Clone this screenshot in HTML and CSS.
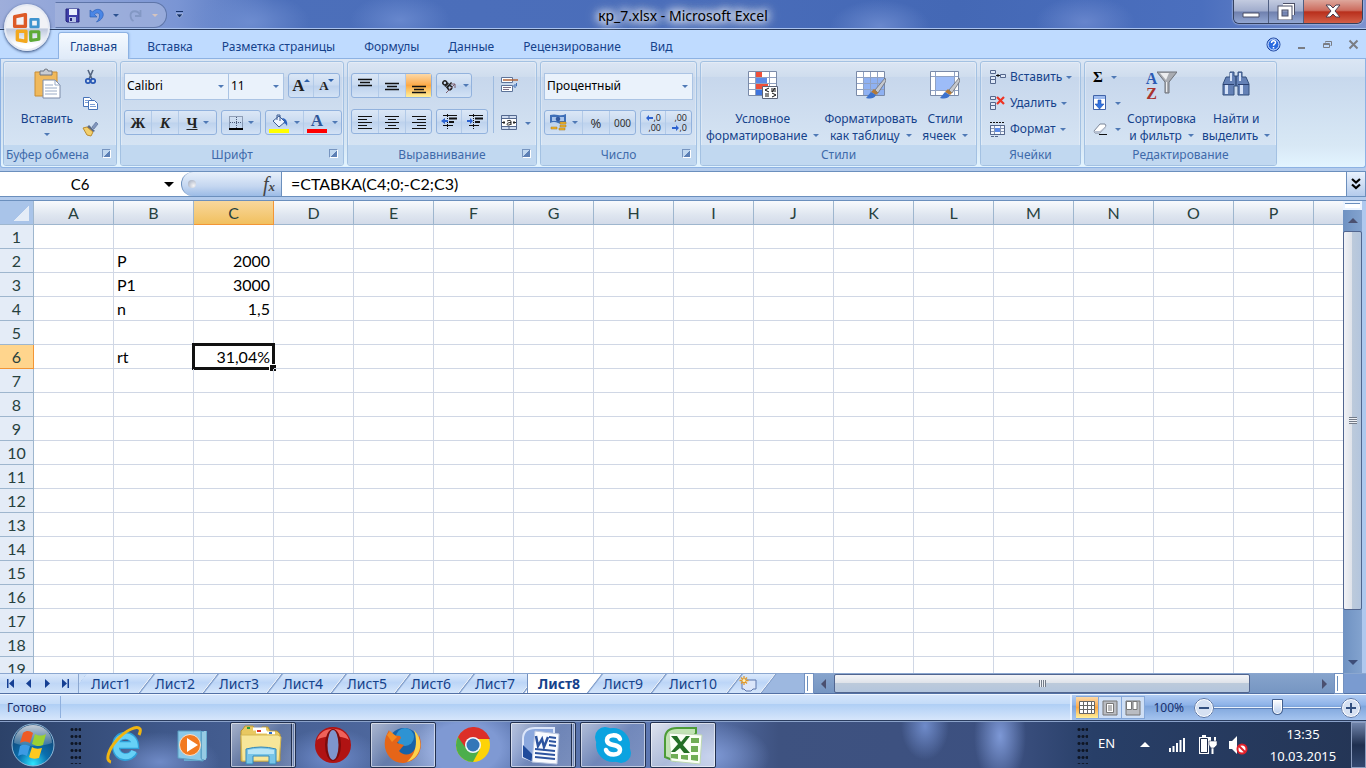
FILE: index.html
```html
<!DOCTYPE html>
<html lang="ru">
<head>
<meta charset="utf-8">
<title>кр_7.xlsx - Microsoft Excel</title>
<link rel="stylesheet" href="styles.css">
</head>
<body>
<div class="app">
  <header class="titlebar">
    <button class="office" aria-label="Office">
      <svg width="30" height="30" viewBox="0 0 28 28" fill="none" stroke-linejoin="round">
        <path d="M2.500 3.500l10-2v11h-10z" stroke="#dd5a26" stroke-width="3.200"/>
        <path d="M17.500 6h7v7h-7z" stroke="#3f94cf" stroke-width="2.600"/>
        <path d="M5 17h8v9.500l-8-1.500z" stroke="#f3a81f" stroke-width="3.200"/>
        <path d="M17.500 17.500h7.500v7l-7.500 1z" stroke="#5daa36" stroke-width="3"/>
      </svg>
    </button>
    <div class="qat">
      <button aria-label="Сохранить"><svg width="15" height="15" viewBox="0 0 15 15"><path d="M1 1h13v13H2l-1-1z" fill="#3e3ea8" stroke="#24247c"/><path d="M4 1h8v6H4z" fill="#e9effc"/><path d="M4 9h7v5H4z" fill="#b7c3e6"/><path d="M5 10h2v3H5z" fill="#24247c"/></svg></button>
      <button aria-label="Отменить"><svg width="15" height="15" viewBox="0 0 15 15"><path d="M1 2v7h7L5.500 6.500C8 4 11 5 10.500 8c0 2-1 4-3 6 6-2 8-7 6-10C11 0 6 1 3.500 4z" fill="#4a86e6" stroke="#2357b0" stroke-width=".6"/></svg></button>
      <i class="dd"></i>
      <button aria-label="Вернуть"><svg width="15" height="15" viewBox="0 0 15 15"><path d="M12.500 2v6H7M12 7C10 2 3 2 2.500 7c0 3 1 5 3 6" fill="none" stroke="#8398c4" stroke-width="1.800"/></svg></button>
      <i class="dd dim"></i>
    </div>
    <button class="customize" aria-label="Настройка панели"><svg width="7" height="8" viewBox="0 0 7 8"><path d="M0 0h7v1H0z" fill="#17346c"/><path d="M0 3h7L3.500 7z" fill="#17346c" stroke="#dce6f7" stroke-width=".5"/></svg></button>
    <h1>кр_7.xlsx - Microsoft Excel</h1>
    <div class="winbtns">
      <button aria-label="Свернуть"><svg width="18" height="18" viewBox="0 0 18 18"><path d="M1 11h16v4H1z" fill="#fff" stroke="#4b4f66"/></svg></button>
      <button aria-label="Развернуть"><svg width="18" height="18" viewBox="0 0 18 18" fill="none"><path d="M6 3h10v10" stroke="#4b4f66" stroke-width="4"/><path d="M6 3h10v10" stroke="#fff" stroke-width="2"/><path d="M3 6h10v10H3z" stroke="#4b4f66" stroke-width="5"/><path d="M3 6h10v10H3z" stroke="#fff" stroke-width="3"/></svg></button>
      <button class="close" aria-label="Закрыть"><svg width="18" height="18" viewBox="0 0 18 18"><path d="M2 3h4l3 3 3-3h4l-5 6 5 6h-4l-3-3-3 3H2l5-6z" fill="#fff" stroke="#4b4052"/></svg></button>
    </div>
  </header>

  <nav class="tabs">
    <button class="tab on">Главная</button><button class="tab">Вставка</button><button class="tab">Разметка страницы</button><button class="tab">Формулы</button><button class="tab">Данные</button><button class="tab">Рецензирование</button><button class="tab">Вид</button>
    <div class="tabtools">
      <button aria-label="Справка"><svg width="15" height="15" viewBox="0 0 15 15"><circle cx="7.500" cy="7.500" r="6.500" fill="#2b6be0" stroke="#173f9c"/><circle cx="7.500" cy="7.500" r="5.500" fill="none" stroke="#d9e8ff"/><path d="M5.500 6c0-3 4-3 4-.5 0 1.500-2 1.500-2 3.200M7.500 10v1.500" fill="none" stroke="#fff" stroke-width="1.500"/></svg></button>
      <button aria-label="Свернуть книгу"><svg width="11" height="11" viewBox="0 0 11 11"><path d="M2 8h7v2H2z" fill="#7a7d84"/></svg></button>
      <button aria-label="Восстановить книгу"><svg width="11" height="11" viewBox="0 0 11 11" fill="none" stroke="#7a7d84"><path d="M1.500 4.500h6v4h-6zM3.500 3.500v-1h6v4h-1M1 5.500h7"/></svg></button>
      <button aria-label="Закрыть книгу"><svg width="11" height="11" viewBox="0 0 11 11"><path d="M1.500 1.500l8 8m0-8l-8 8" stroke="#7a7d84" stroke-width="2"/></svg></button>
    </div>
  </nav>

  <section class="ribbon">
    <div class="group g-clip">
      <div class="body">
        <button class="big"><svg width="30" height="32" viewBox="0 0 30 32"><path d="M3 4h22v24H3z" fill="#f0b95c" stroke="#c98e35"/><path d="M8 3h4a2 2 0 0 1 4 0h4v4H8z" fill="#c9ccd2" stroke="#6e7480"/><path d="M11 12h12l5 5v13H11z" fill="#fff" stroke="#7d8ba8"/><path d="M23 12v5h5M13 17h8M13 20h12M13 23h12M13 26h12" fill="none" stroke="#9aabc6"/></svg><span>Вставить</span><i class="dd"></i></button>
        <div class="stack tools">
          <button aria-label="Вырезать"><svg width="17" height="16" viewBox="0 0 17 16" fill="none"><path d="M6 1l4 9M11 1L7 10" stroke="#53647f" stroke-width="1.600"/><circle cx="6" cy="12" r="2.200" stroke="#2757b4" stroke-width="1.700"/><circle cx="11" cy="12" r="2.200" stroke="#2757b4" stroke-width="1.700"/></svg></button>
          <button aria-label="Копировать"><svg width="17" height="16" viewBox="0 0 17 16" fill="#fff" stroke="#4773b8"><path d="M1.500 2.500h6l2 2v7h-8z"/><path d="M6.500 5.500h6l3 3v6h-9z"/><path d="M3 5.500h3M3 7.500h3M8 9.500h5M8 11.500h6" stroke="#7d9fd5"/></svg></button>
          <button aria-label="Формат по образцу"><svg width="17" height="16" viewBox="0 0 17 16"><path d="M10 6l4-5 2 2-4 5z" fill="#8196bd" stroke="#546a94" stroke-width=".6"/><path d="M7 4l6 6-2 1-6-5z" fill="#5b6a86"/><path d="M1 7l4-1 6 5-2 4-4-1z" fill="#f2cf6c" stroke="#b98a2f"/></svg></button>
        </div>
      </div>
      <h2>Буфер обмена<i class="launch"></i></h2>
    </div>

    <div class="group g-font">
      <div class="body rows">
        <div class="row">
          <div class="pair">
            <label class="combo w-font"><select aria-label="Шрифт"><option>Calibri</option></select></label>
            <label class="combo w-size"><select aria-label="Размер"><option>11</option></select></label>
          </div>
          <div class="set"><button class="w26 serif big-a" aria-label="Увеличить размер">A<i class="up"></i></button><button class="w26 serif small-a" aria-label="Уменьшить размер">A<i class="down"></i></button></div>
        </div>
        <div class="row">
          <div class="set"><button class="w27 serif">Ж</button><button class="w27 serif it">К</button><button class="w37 serif"><u>Ч</u><i class="dd"></i></button></div>
          <div class="set"><button class="w38" aria-label="Границы"><svg width="14" height="14" viewBox="0 0 14 14" stroke="#4a5a78" fill="none"><path d="M.5 .5h13v12H.5zM7.500 1v12M1 6.500h12" stroke-dasharray="1 1"/><path d="M0 13h14" stroke="#000" stroke-width="2"/></svg><i class="dd"></i></button></div>
          <div class="set"><button class="w38" aria-label="Цвет заливки"><svg width="20" height="20" viewBox="0 0 20 20"><path d="M10 3l6 6-6 5-6-6z" fill="#eef4ff" stroke="#3d5d93"/><path d="M8 7V2h3v6" fill="none" stroke="#3d5d93"/><path d="M13 5c4 0 6 4 5 8-1-2-2-3-4-3l2-1z" fill="#2c62bf"/><path d="M0 16h20v4H0z" fill="#ff0"/></svg><i class="dd"></i></button><button class="w37" aria-label="Цвет текста"><span class="fc">A</span><i class="dd"></i></button></div>
        </div>
      </div>
      <h2>Шрифт<i class="launch"></i></h2>
    </div>

    <div class="group g-align">
      <div class="body rows side">
        <div class="col">
          <div class="row">
            <div class="set">
              <button class="w27" aria-label="По верхнему краю"><svg width="14" height="16" viewBox="0 0 14 16"><path d="M0 1.500h14M2 4.500h10M0 7.500h14" stroke="#111" stroke-width="1.300"/></svg></button>
              <button class="w27" aria-label="По середине"><svg width="14" height="16" viewBox="0 0 14 16"><path d="M0 5.500h14M2 8.500h10M0 11.500h14" stroke="#111" stroke-width="1.300"/></svg></button>
              <button class="w26 hot" aria-label="По нижнему краю"><svg width="14" height="16" viewBox="0 0 14 16"><path d="M0 8.500h14M2 11.500h10M0 14.500h14" stroke="#111" stroke-width="1.300"/></svg></button>
            </div>
            <div class="set"><button class="w35" aria-label="Ориентация"><svg width="18" height="18" viewBox="0 0 18 18"><g transform="rotate(45 7 8)" fill="none" stroke="#222" stroke-width="1.500"><circle cx="4" cy="8" r="2"/><path d="M6.500 5.500v5M8.500 3v7.500"/><circle cx="10.800" cy="8" r="2"/></g><path d="M6 16l9-9m0 4V7h-4" stroke="#7b5c6b" fill="none"/></svg><i class="dd"></i></button></div>
          </div>
          <div class="row">
            <div class="set">
              <button class="w27" aria-label="По левому краю"><svg width="14" height="14" viewBox="0 0 14 14"><path d="M0 1.500h14M0 4.500h9M0 7.500h14M0 10.500h9M0 13.500h14" stroke="#111"/></svg></button>
              <button class="w27" aria-label="По центру"><svg width="14" height="14" viewBox="0 0 14 14"><path d="M0 1.500h14M3 4.500h8M0 7.500h14M3 10.500h8M0 13.500h14" stroke="#111"/></svg></button>
              <button class="w26" aria-label="По правому краю"><svg width="14" height="14" viewBox="0 0 14 14"><path d="M0 1.500h14M5 4.500h9M0 7.500h14M5 10.500h9M0 13.500h14" stroke="#111"/></svg></button>
            </div>
            <div class="set">
              <button class="w26" aria-label="Уменьшить отступ"><svg width="16" height="15" viewBox="0 0 16 15"><path d="M2 1.500h14M2 11.500h10" stroke="#111"/><path d="M8 4.500h8M8 8h5" stroke="#111" stroke-width="2"/><path d="M6.500 0v15" stroke="#111" stroke-dasharray="1 1"/><path d="M0 7l4-3v2h3v2H4v2z" fill="#2c62d0"/></svg></button>
              <button class="w26" aria-label="Увеличить отступ"><svg width="16" height="15" viewBox="0 0 16 15"><path d="M2 1.500h14M2 11.500h10" stroke="#111"/><path d="M8 4.500h8M8 8h5" stroke="#111" stroke-width="2"/><path d="M6.500 0v15" stroke="#111" stroke-dasharray="1 1"/><path d="M6 7L3 4v2H0v2h3v2z" fill="#2c62d0"/></svg></button>
            </div>
          </div>
        </div>
        <div class="col extra">
          <button class="ic" aria-label="Перенос текста"><svg width="17" height="16" viewBox="0 0 17 16" fill="#fff"><path d="M.5 .5h11v5H.5zM.5 8.500h11v6H.5z" stroke="#5d7399"/><path d="M2 3h15" stroke="#b0643a" stroke-width="1.400"/><path d="M2 10.500h8M2 12.500h6" stroke="#7d6f85"/><path d="M15.500 6v3h-2m1-2l-2 2 2 2" fill="none" stroke="#3d6db5"/></svg></button>
          <button class="ic" aria-label="Объединить"><svg width="17" height="16" viewBox="0 0 17 16"><path d="M.5 .5h15v14H.5zM.5 3.500h15M.5 11.500h15M8 1v2M8 12v3" fill="#cfdcf0" stroke="#53688f"/><path d="M1 4h14v7H1z" fill="#fff"/><path d="M1 7.500h3M12 7.500h3M3 6v3M13 6v3" stroke="#222"/><path d="M6 6c3-1 4-1 4 1v3M10 7.500c-5 0-5 3-2 2.500l2-1" stroke="#222" fill="none"/></svg><i class="dd"></i></button>
        </div>
      </div>
      <h2>Выравнивание<i class="launch"></i></h2>
    </div>

    <div class="group g-num">
      <div class="body rows">
        <div class="row"><label class="combo w-full"><select aria-label="Числовой формат"><option>Процентный</option></select></label></div>
        <div class="row">
          <div class="set"><button class="w38" aria-label="Финансовый формат"><svg width="17" height="17" viewBox="0 0 17 17"><path d="M0 1q4-1 8 0t8-1v9q-4 2-8 0T0 9z" fill="#3e6fb8"/><path d="M2 3h12v4H2z" fill="#a9c4ea"/><circle cx="8" cy="5" r="2.300" fill="#3159a0"/><path d="M10 8h6v2h-6zM10 11h6v2h-6zM9 14h6v2H9zM1 13h6v2H1z" fill="#f1b52d" stroke="#a77614" stroke-width=".5"/></svg><i class="dd"></i></button><button class="w27 glyph" aria-label="Процентный формат">%</button><button class="w26 glyph sm" aria-label="Формат с разделителями">000</button></div>
          <div class="set">
            <button class="w26 digits" aria-label="Увеличить разрядность"><span><svg width="7" height="6" viewBox="0 0 7 6"><path d="M0 3l3-3v2h4v2H3v2z" fill="#2c62d0"/></svg>,0</span><span>,00</span></button>
            <button class="w26 digits" aria-label="Уменьшить разрядность"><span>,00</span><span><svg width="7" height="6" viewBox="0 0 7 6"><path d="M7 3L4 0v2H0v2h4v2z" fill="#2c62d0"/></svg>,0</span></button>
          </div>
        </div>
      </div>
      <h2>Число<i class="launch"></i></h2>
    </div>

    <div class="group g-style">
      <div class="body">
        <button class="big"><svg width="30" height="32" viewBox="0 0 30 32"><path d="M.5 3.500h28v24H.5z" fill="#fff" stroke="#7a8aa8"/><path d="M1 9.500h27M1 15.500h27M1 21.500h27M7.500 4v23M21.500 4v23" stroke="#8fa0c0"/><path d="M8 4h6v5H8z" fill="#ee4f3a"/><path d="M8 10h11v5H8z" fill="#5b8ae8"/><path d="M8 16h12v5H8z" fill="#ee4f3a"/><path d="M8 22h6v5H8z" fill="#3f74dd"/><path d="M14.500 18.500h15v12h-15z" fill="#fff" stroke="#5b6478"/><path d="M21 20l-4 2 4 2M17 26h4M17 28h4M23 21h5M23 23h5M24 25l4 2-4 2M27 20l-3 4" stroke="#111" fill="none"/></svg><span>Условное</span><span>форматирование<i class="dd"></i></span></button>
        <button class="big"><svg width="30" height="32" viewBox="0 0 30 32"><path d="M.5 3.500h28v24H.5z" fill="#fff" stroke="#7a8aa8"/><path d="M8 10h20v17H8z" fill="#8fb1f2"/><path d="M1 9.500h27M1 15.500h27M1 21.500h27M7.500 4v23M14.500 4v23M21.500 4v23" stroke="#90a2c4"/><path d="M29 10l1 3-8 12-3-3z" fill="#c5c8ce" stroke="#6a6d75" stroke-width=".8"/><path d="M18 21l4 4-2 2-5-3z" fill="#b47a36"/><path d="M15 24l5 3c-2 4-6 4-10 3z" fill="#3d72cc"/></svg><span>Форматировать</span><span>как таблицу<i class="dd"></i></span></button>
        <button class="big"><svg width="30" height="32" viewBox="0 0 30 32"><path d="M.5 3.500h28v24H.5z" fill="#fff" stroke="#7a8aa8"/><path d="M1 8.500h27M1 22.500h27M5.500 4v23M24.500 4v23" stroke="#90a2c4"/><path d="M6 9h18v13H6z" fill="#9dbcf8"/><path d="M29 10l1 3-8 12-3-3z" fill="#c5c8ce" stroke="#6a6d75" stroke-width=".8"/><path d="M18 21l4 4-2 2-5-3z" fill="#b47a36"/><path d="M15 24l5 3c-2 4-6 4-10 3z" fill="#3d72cc"/></svg><span>Стили</span><span>ячеек<i class="dd"></i></span></button>
      </div>
      <h2>Стили</h2>
    </div>

    <div class="group g-cells">
      <div class="body">
        <div class="stack">
          <button class="line"><svg width="17" height="16" viewBox="0 0 17 16" fill="#dfe9f8" stroke="#54678c"><path d="M1.500 1.500h5v3h-5zM1.500 7.500h5v3h-5zM1.500 10.500h5v4h-5zM11.500 5.500h5v3h-5z"/><path d="M7 6.500h4M9 5v3" stroke="#111"/></svg>Вставить<i class="dd"></i></button>
          <button class="line"><svg width="17" height="16" viewBox="0 0 17 16" fill="#dfe9f8" stroke="#54678c"><path d="M1.500 1.500h5v3h-5zM1.500 7.500h5v3h-5zM1.500 10.500h5v4h-5z"/><path d="M8 2l7 7m0-7L8 9" stroke="#ee3424" stroke-width="2.200"/></svg>Удалить<i class="dd"></i></button>
          <button class="line"><svg width="17" height="16" viewBox="0 0 17 16" fill="#f4f8ff" stroke="#54678c"><path d="M1 1.500h14" stroke="#111" stroke-dasharray="2 1"/><path d="M1.500 4.500h14v9h-14zM2 7.500h13M2 10.500h13M5.500 5v8M11.500 5v8" stroke="#8596b5"/><path d="M1.500 4.500h14v9h-14z" fill="none"/><path d="M6 7h5v4H6z" fill="#5b8ae8" stroke="none"/><path d="M2 15.500h8" stroke-dasharray="3 1"/></svg>Формат<i class="dd"></i></button>
        </div>
      </div>
      <h2>Ячейки</h2>
    </div>

    <div class="group g-edit">
      <div class="body">
        <div class="stack">
          <button class="line sigma">Σ<i class="dd"></i></button>
          <button class="line" aria-label="Заполнить"><svg width="14" height="16" viewBox="0 0 14 16"><path d="M.5 .5h12v14H.5z" fill="#fff" stroke="#4063a8"/><path d="M1 1h11v3H1z" fill="#9ebcf0"/><path d="M5 5h3v4h3l-4.500 5L2 9h3z" fill="#3273e0" stroke="#1b4fae" stroke-width=".6"/></svg><i class="dd"></i></button>
          <button class="line" aria-label="Очистить"><svg width="14" height="16" viewBox="0 0 14 16"><path d="M1 10l6-7h5l1 2-6 7H2z" fill="#fff" stroke="#7d8799"/><path d="M1 10h6v2H2zM7 10l6-5v2l-6 5z" fill="#b8c1d1"/><path d="M6 13.500h8" stroke="#111"/></svg><i class="dd"></i></button>
        </div>
        <button class="big"><span class="sort"><span class="az"><b>A</b><b>Z</b></span><svg width="20" height="24" viewBox="0 0 20 24"><path d="M0 1h20l-8 10v11H8V11z" fill="#a9acb2" stroke="#6e727a"/><path d="M3 2h9l-3 7z" fill="#ecedef"/><path d="M9 11h1v10H9z" fill="#ecedef"/></svg></span><span>Сортировка</span><span>и фильтр<i class="dd"></i></span></button>
        <button class="big"><svg width="30" height="32" viewBox="0 0 30 32"><path d="M9 4h4v4h2v10h-2v9H2V16l3-7h4zM21 4h-4v4h-2v10h2v9h11V16l-3-7h-4z" fill="#6481b6" stroke="#34507f"/><path d="M4 17h3v9H4zM19 17h3v9h-3zM9 5h2v8H9zM18 5h2v8h-2z" fill="#d5e2f8"/><path d="M2 16.500h11M17 16.500h11" stroke="#2b4170"/></svg><span>Найти и</span><span>выделить<i class="dd"></i></span></button>
      </div>
      <h2>Редактирование</h2>
    </div>
  </section>

  <section class="formulabar">
    <div class="namebox"><input aria-label="Имя" value="C6"><i class="tri"></i></div>
    <div class="fxzone"><i class="knob"></i><button class="fx" aria-label="Вставить функцию"><em>f</em><sub>x</sub></button></div>
    <input class="formula" aria-label="Строка формул" value="=СТАВКА(C4;0;-C2;C3)">
    <button class="expand" aria-label="Развернуть строку формул"><svg width="12" height="12" viewBox="0 0 12 12"><path d="M2 1l4 3.500L10 1M2 6.500L6 10l4-3.500" fill="none" stroke="#000" stroke-width="2.200"/></svg></button>
  </section>

  <main class="work">
    <div class="sheet">
      <table class="grid"><thead></thead><tbody></tbody></table>
    </div>
    <div class="vscroll">
      <i class="split"></i>
      <button class="vbtn" aria-label="Вверх"><i class="au"></i></button>
      <div class="vthumb"><i></i></div>
      <div class="vspace"></div>
      <button class="vbtn" aria-label="Вниз"><i class="ad"></i></button>
    </div>
  </main>

  <div class="sheetbar">
    <div class="navs">
      <button aria-label="Первый лист"><svg width="8" height="9" viewBox="0 0 8 9"><path d="M0 0h1.500v9H0zM7 0v9L2 4.500z"/></svg></button>
      <button aria-label="Предыдущий лист"><svg width="8" height="9" viewBox="0 0 8 9"><path d="M6 0v9L1 4.500z"/></svg></button>
      <button aria-label="Следующий лист"><svg width="8" height="9" viewBox="0 0 8 9"><path d="M2 0v9l5-4.500z"/></svg></button>
      <button aria-label="Последний лист"><svg width="8" height="9" viewBox="0 0 8 9"><path d="M8 0H6.500v9H8zM1 0v9l5-4.500z"/></svg></button>
    </div>
    <div class="stabs">
      <button class="stab first"><span>Лист1</span></button><button class="stab"><span>Лист2</span></button><button class="stab"><span>Лист3</span></button><button class="stab"><span>Лист4</span></button><button class="stab"><span>Лист5</span></button><button class="stab"><span>Лист6</span></button><button class="stab"><span>Лист7</span></button><button class="stab on"><span>Лист8</span></button><button class="stab"><span>Лист9</span></button><button class="stab ten"><span>Лист10</span></button><button class="stab new" aria-label="Вставить лист"><span><svg width="18" height="16" viewBox="0 0 18 16"><path d="M3 4h14v9h-3l-2 2H7l-2-2H3z" fill="#dbe6fa" stroke="#5c76ac"/><path d="M5 0v9M.5 4.500h9M2 1.500l6 6m0-6l-6 6" stroke="#e09a2b" stroke-width="1.300"/><circle cx="5" cy="4.500" r="1.500" fill="#fff3c0"/></svg></span></button>
    </div>
    <div class="hscroll">
      <i class="hsplit"></i>
      <button class="hbtn" aria-label="Влево"><i class="al"></i></button>
      <div class="hthumb"><i></i></div>
      <div class="hspace"></div>
      <button class="hbtn" aria-label="Вправо"><i class="ar"></i></button>
      <i class="hsplit"></i>
    </div>
  </div>

  <footer class="status">
    <span class="ready">Готово</span>
    <div class="views">
      <button class="hot" aria-label="Обычный"><svg width="17" height="14" viewBox="0 0 17 14"><path d="M.5 .5h15v12H.5zM1 4.500h15M1 8.500h15M4.500 1v12M8.500 1v12M12.500 1v12" fill="#fff" stroke="#666"/></svg></button>
      <button aria-label="Разметка страницы"><svg width="16" height="16" viewBox="0 0 16 16"><path d="M1 1h14v14H1z" fill="#b9bcc2" stroke="#777"/><path d="M4.500 3.500h7v9h-7zM6 6h4M6 8h4M6 10h4" fill="#fff" stroke="#777"/></svg></button>
      <button aria-label="Страничный режим"><svg width="16" height="16" viewBox="0 0 16 16"><path d="M1 1h14v14H1z" fill="#b9bcc2" stroke="#777"/><path d="M1.500 1.500h5v8h-5zM8 1.500h4v8H8z" fill="#fff" stroke="#777"/></svg></button>
    </div>
    <div class="zoom">
      <span>100%</span>
      <button class="round" aria-label="Уменьшить"><svg width="10" height="10" viewBox="0 0 10 10"><path d="M0 5h10" stroke="#33507f" stroke-width="2"/></svg></button>
      <input type="range" aria-label="Масштаб" min="0" max="200" value="100">
      <button class="round" aria-label="Увеличить"><svg width="10" height="10" viewBox="0 0 10 10"><path d="M0 5h10M5 0v10" stroke="#33507f" stroke-width="2"/></svg></button>
    </div>
  </footer>

  <div class="taskbar">
    <button class="start" aria-label="Пуск"><svg width="44" height="44" viewBox="0 0 44 44"><defs><radialGradient id="orb" cx=".5" cy=".95" r=".9"><stop offset="0" stop-color="#2fe6ff"/><stop offset=".4" stop-color="#0a6fae"/><stop offset="1" stop-color="#123a66"/></radialGradient><linearGradient id="gl" x2="0" y2="1"><stop offset="0" stop-color="#fff" stop-opacity=".75"/><stop offset="1" stop-color="#fff" stop-opacity=".15"/></linearGradient></defs><circle cx="22" cy="22" r="21" fill="url(#orb)" stroke="#8fb8d8"/><path d="M3 20C3 9 12 2 22 2s19 7 19 18c-10 4-28 4-38 0z" fill="url(#gl)"/><path d="M12 10c4-3 7-2 10 0l-3 10c-3-2-6-2-10 0z" fill="#ee5a24"/><path d="M24 11c4 2 7 2 11 0l-3 11c-4 2-7 1-11-1z" fill="#9bd034"/><path d="M9 23c3-2 6-1 10 0l-3 10c-3-2-6-2-9 0z" fill="#3d9be4"/><path d="M21 24c3 2 6 2 10 1l-3 10c-4 1-7 1-10-1z" fill="#fdc920"/></svg></button>
    <i class="grip"></i>
    <div class="tasks">
      <button class="task" aria-label="Internet Explorer"><svg width="40" height="40" viewBox="0 0 40 40" fill="none"><path d="M31 27c-3 7-18 8-18-6s18-13 19-1H13" stroke="#2f9fd8" stroke-width="8"/><path d="M31 26c-3 8-18 8-18-5s18-13 19-1H13" stroke="#66d0f6" stroke-width="5.500"/><path d="M8 37c-6-1-3-12 6-22S34 0 37 4c1 2 0 4-1 6" stroke="#f0b510" stroke-width="3"/></svg></button>
      <button class="task" aria-label="Media Player"><svg width="34" height="34" viewBox="0 0 34 34"><path d="M8 3l23 0v27l-4 3H8z" fill="#67abcf"/><path d="M27 4v27M29 3v29" stroke="#c7ebf8"/><path d="M2 3h23v27l2 3-25-3z" fill="#8bc9e8" stroke="#5b9ec2"/><circle cx="14" cy="17" r="10.500" fill="#f27a20" stroke="#fbe0c8"/><path d="M11 10l11 7-11 7z" fill="#fff"/></svg></button>
      <button class="task open multi" aria-label="Проводник"><svg width="42" height="40" viewBox="0 0 42 40"><path d="M3 4l2-3h8l2 3h5l2-2h6l2 4h7l3 3v27H1V6z" fill="#e8c860" stroke="#b59332"/><path d="M13 4h13M16 7h11M27 8h8" stroke="#fff" stroke-width="3"/><path d="M7 3h3" stroke="#2c9b39" stroke-width="2"/><path d="M17 6h4" stroke="#db3527" stroke-width="2"/><path d="M29 8h3" stroke="#2c6fd0" stroke-width="2"/><path d="M1 10h37l3 2-2 24H2z" fill="#f7e699" stroke="#d5b752"/><path d="M6 24q15-4 30 0v15h-7v-8H13v8H6z" fill="#78c5e8" stroke="#3488b8"/><path d="M8 25q13-3 26 0v4H8z" fill="#b8e5f6"/></svg></button>
      <button class="task" aria-label="Opera"><svg width="38" height="38" viewBox="0 0 38 38"><ellipse cx="19" cy="19" rx="18" ry="18" fill="#b01313"/><path d="M3 14C7-1 31-1 35 14 28 9 10 9 3 14z" fill="#f0625a"/><ellipse cx="19" cy="19" rx="8" ry="16" fill="#7d0b0b"/><ellipse cx="19" cy="19" rx="5.500" ry="15" fill="#7e95cc"/></svg></button>
      <button class="task open" aria-label="Firefox"><svg width="38" height="38" viewBox="0 0 38 38"><circle cx="20" cy="18" r="16" fill="#1762a8"/><circle cx="21" cy="11" r="9" fill="#2d93d3"/><path d="M35 9c5 13 0 26-15 28C7 38-3 25 2 10l3-6 2 5 9 1 1 2-4 5 7 2-5 6c4 5 12 5 16-2 3-5 3-8 1-15 2 1 3 3 3 6z" fill="#e56518"/><path d="M30 4c11 11 7 28-7 32 9-8 11-20 7-32z" fill="#fbd24c"/><path d="M3 9l3-4 7 6-5 5z" fill="#f58a20"/></svg></button>
      <button class="task" aria-label="Chrome"><svg width="36" height="36" viewBox="0 0 36 36"><circle cx="18" cy="18" r="17" fill="#fdd307"/><path d="M18 18L3 10A17 17 0 0 0 18 35l7-13z" fill="#4cae4c"/><path d="M3 10a17 17 0 0 1 31 0l1 2H18l-8 8z" fill="#dc2f28"/><circle cx="18" cy="18" r="8" fill="#f4f7fa"/><circle cx="18" cy="18" r="6.500" fill="#3477b8"/></svg></button>
      <button class="task open multi" aria-label="Word"><svg width="40" height="40" viewBox="0 0 40 40"><path d="M2 32V14Q2 3 14 3h19v5L12 36z" fill="#8ba8de" stroke="#dce6fa" stroke-width="2"/><path d="M2 32V20l10 10v7z" fill="#1f4b9c"/><path d="M14 6l24 3-2 30-25-2z" fill="#f9fbff" stroke="#bac6df"/><path d="M28 12l7 1M28 16l7 1M28 20l7 1M14 24l20 2M14 28l20 2M14 32l20 2" stroke="#2c539f" stroke-width="2"/><path d="M15 11l2 10 4-7 2 8 4-10" stroke="#2c539f" stroke-width="2.500" fill="none"/></svg></button>
      <button class="task open" aria-label="Skype"><svg width="38" height="38" viewBox="0 0 38 38"><circle cx="11" cy="11" r="10" fill="#0ba3e0"/><circle cx="27" cy="27" r="10" fill="#0ba3e0"/><circle cx="19" cy="19" r="17" fill="#0ba3e0"/><path d="M26 13c-2-5-13-5-13 1 0 7 13 3 13 10 0 6-12 6-14 0" fill="none" stroke="#fff" stroke-width="4.500" stroke-linecap="round"/></svg></button>
      <button class="task open bright" aria-label="Excel"><svg width="40" height="40" viewBox="0 0 40 40"><path d="M2 32V14Q2 3 14 3h19v5L12 36z" fill="#c2e3b4" stroke="#4c9c36" stroke-width="2"/><path d="M6 8l33 2-2 29-29-3z" fill="#fafff5" stroke="#bdd7b2"/><path d="M8 11h6l4 6 5-6h4l-7 9 7 8h-6l-4-5-5 4H8l7-8z" fill="#236e24"/><path d="M28 13h8v5h-8zM28 21h7v6h-7zM8 29h7v5l-7-1zM18 30h7v5l-7-1zM28 30h7v6l-7-1z" fill="#70ad55"/></svg></button>
    </div>
    <i class="grip right"></i>
    <div class="tray">
      <span class="lang">EN</span>
      <svg width="10" height="6" viewBox="0 0 10 6"><path d="M5 0l5 5H0z" fill="#fff"/></svg>
      <svg width="16" height="14" viewBox="0 0 16 14"><path d="M0 10h2v4H0zM3.500 8h2v6h-2zM7 5h2v9H7zM10.500 2h2v12h-2zM14 0h2v14h-2z" fill="#fff"/></svg>
      <svg width="19" height="20" viewBox="0 0 19 20"><path d="M4 0h4v2h3v17H1V2h3z" fill="#fff"/><path d="M2.500 3.500h7v14h-7z" fill="#fff" stroke="#1c2a48"/><path d="M12 2v4M17 2v4M14.500 11v8" stroke="#fff" stroke-width="2"/><path d="M11 6h8v4l-3 3h-3l-2-3z" fill="#fff" stroke="#1c2a48" stroke-width=".5"/></svg>
      <svg width="20" height="20" viewBox="0 0 20 20"><path d="M1 6h3v8H1zM4 6l5-5v18l-5-5z" fill="#fff"/><circle cx="14" cy="14" r="4.500" fill="#fff" stroke="#e2202a" stroke-width="2"/><path d="M11 11l6 6" stroke="#e2202a" stroke-width="2"/></svg>
      <div class="clock"><span>13:35</span><span>10.03.2015</span></div>
    </div>
    <button class="desk" aria-label="Свернуть все окна"></button>
  </div>
</div>
<script src="app.js"></script>
</body>
</html>
```
FILE: app.js
```js
const columns = "ABCDEFGHIJKLMNOP".split("").concat("");
const values = { B2: "P", C2: "2000", B3: "P1", C3: "3000", B4: "n", C4: "1,5", B6: "rt", C6: "31,04%" };
const selected = "C6";

const head = document.createElement("tr");
head.innerHTML = '<th class="corner"><i></i></th>' + columns
  .map(c => `<th scope="col" class="${c === selected[0] ? "sel" : ""}">${c}</th>`).join("");
document.querySelector(".grid thead").append(head);

const body = document.querySelector(".grid tbody");
const rowHeight = 24;
const rowCount = Math.ceil(document.querySelector(".sheet").clientHeight / rowHeight) - 1;
for (let r = 1; r <= rowCount; r++) {
  const tr = document.createElement("tr");
  tr.innerHTML = `<th scope="row" class="${String(r) === selected.slice(1) ? "sel" : ""}">${r}</th>` + columns
    .map(c => {
      const id = c + r;
      const v = c ? values[id] || "" : "";
      const cls = [/^\d/.test(v) ? "num" : "", id === selected ? "cur" : ""].join(" ").trim();
      return `<td${cls ? ` class="${cls}"` : ""}>${v}</td>`;
    }).join("");
  body.append(tr);
}
```
FILE: styles.css
```css
* { box-sizing: border-box; }
html, body { height: 100%; margin: 0; }
body { font: 12px/16px "Noto Sans", "Open Sans", sans-serif; color: #15428b; overflow: hidden; }
button, input, select { font: inherit; color: inherit; background: none; border: 0; padding: 0; margin: 0; outline: 0; }
button { display: flex; align-items: center; justify-content: center; }
svg { display: block; flex: none; }
i { font-style: normal; }
.app { display: flex; flex-direction: column; height: 100vh; background: #b3cbec; }
.dd { flex: none; width: 0; height: 0; border: 3px solid transparent; border-top-color: #4f79b5; border-bottom: 0; }
.qat .dd { border-top-color: #2c5291; }
.qat .dim { border-top-color: #d5c4bf; }

/* title bar */
.titlebar { position: relative; display: flex; height: 30px; flex: none; padding-left: 55px; border-bottom: 1px solid #283a5c; background: radial-gradient(ellipse 60px 30px at 250px 22px, #6d8cd0, transparent), radial-gradient(ellipse 50px 26px at 400px 20px, #6787cd, transparent), radial-gradient(ellipse 50px 26px at 880px 26px, #6988cd, transparent), radial-gradient(ellipse 50px 26px at 1085px 22px, #6785cc, transparent), linear-gradient(90deg, #9eaedb, #7a95d4 13%, #4c6fba 20%, #4a6dba 50%, #4468b5 70%, #4b6fbe 88%, #7c92cf); box-shadow: inset 0 -1px #a9c2ee; }
.office { position: absolute; left: 4px; top: 4px; z-index: 2; width: 46px; height: 47px; border-radius: 50%; border: 2px solid #e6eaf3; background: linear-gradient(#f1f2f6 0 50%, #bfc9dd 54%, #e6ebf4 75%, #fff 90%); box-shadow: 0 1px 3px #28406f; }
.qat { display: flex; align-items: center; gap: 9px; height: 26px; width: 112px; margin-top: 2px; padding-left: 9px; border: 1px solid #5e75a8; border-left-color: transparent; border-radius: 0 13px 13px 0; background: #a8b7dd99; }
.customize { width: 24px; }
.titlebar h1 { position: absolute; left: 50%; top: 6px; transform: translateX(-50%); margin: 0; font: 14px/20px "Noto Sans", sans-serif; color: #000; text-shadow: 0 0 8px #fff, 0 0 8px #fff, 0 0 12px #fff, 0 0 16px #fff; }
.winbtns { display: flex; height: 24px; margin: 0 3px 0 auto; border: 1px solid #34415f; border-top: 0; border-radius: 0 0 6px 6px; overflow: hidden; box-shadow: 0 0 2px #fff; }
.winbtns button { width: 35px; padding-bottom: 2px; border-right: 1px solid #505f82; background: linear-gradient(#c3cbe0, #a0accc 48%, #6f80ae 52%, #93a7d2); }
.winbtns .close { width: 58px; border: 0; background: linear-gradient(#dea79c, #cc6c5e 45%, #b82f1c 52%, #d35f48); }

/* ribbon tabs */
.tabs { display: flex; align-items: stretch; gap: 7px; height: 29px; flex: none; padding: 2px 7px 0 58px; background: #bfdbff; border-bottom: 1px solid #8db2e3; }
.tab { padding: 3px 11px 0; border-radius: 3px 3px 0 0; }
.tab.on { margin-bottom: -1px; background: linear-gradient(#f5faff, #dfeaf8); border: 1px solid #8db2e3; border-bottom: 0; padding: 1px 11px 0; box-shadow: 1px 0 2px #a5c5ee; }
.tabtools { display: flex; gap: 15px; margin-left: auto; align-items: center; padding-bottom: 1px; }

/* ribbon */
.ribbon { display: flex; gap: 3px; height: 109px; flex: none; padding: 2px 2px 1px; border: 1px solid #8db2e3; border-top: 0; border-radius: 0 0 3px 3px; background: linear-gradient(#dbe6f4, #d1dff0 16%, #c7d8ed 17%, #d8e8f5 80%, #e3f4ff); }
.group { display: flex; flex-direction: column; flex: none; border: 1px solid #a3c1e2; border-radius: 3px; background: linear-gradient(#dbe5f3, #cfddee 14%, #c7d7ec 15%, #d9e7f5); box-shadow: inset 0 0 0 1px #ffffff44; overflow: hidden; }
.group h2 { display: flex; align-items: center; justify-content: center; position: relative; height: 20px; margin: 0; font: 12px/20px "Noto Sans", sans-serif; color: #3e6aaa; background: #c1d8f0; }
.launch { position: absolute; right: 5px; top: 4px; width: 9px; height: 9px; border: 1px solid #7795c0; border-right-color: #fff; border-bottom-color: #fff; background: linear-gradient(135deg, transparent 50%, #5d80b5 50%); }
.g-clip { width: 114px; } .g-font { width: 224px; } .g-align { width: 190px; } .g-num { width: 157px; } .g-style { width: 277px; } .g-cells { width: 101px; } .g-edit { width: 193px; }
.g-clip h2 { justify-content: flex-start; padding-left: 2px; }
.body { display: flex; flex: 1; min-height: 0; }
.rows { flex-direction: column; gap: 12px; padding: 11px 3px 0; }
.side { flex-direction: row; gap: 4px; }
.col { display: flex; flex-direction: column; gap: 11px; }
.row { display: flex; gap: 4px; height: 25px; }
.pair { display: flex; }
.set { display: flex; border: 1px solid #92b2dd; border-radius: 3px; background: linear-gradient(#dbe7f6, #c9daf0 48%, #bdd2ed 52%, #d3e2f5); }
.set button { gap: 5px; border-right: 1px solid #b2cae8; position: relative; }
.set button:last-child { border-right: 0; }
.w26 { width: 25px; } .w27 { width: 27px; } .w35 { width: 34px; } .w37 { width: 37px; } .w38 { width: 38px; }
.hot { background: linear-gradient(#fcd8a6, #fdb25a 40%, #fda943 50%, #fff09a); }
.set .serif { font: bold 15px/20px "Liberation Serif", serif; color: #222; }
.set .it { font-style: italic; }
.set .small-a { font-size: 13px; gap: 4px; }
.set .big-a { font-size: 17px; gap: 4px; }
.up, .down { border: 3px solid transparent; border-bottom-color: #2e62ad; border-top: 0; align-self: flex-start; margin: 5px 0 0 -5px; }
.down { border-top: 3px solid #2e62ad; border-bottom: 0; }
.fc { width: 20px; height: 20px; border-bottom: 4px solid #f00; font: bold 17px/15px "Liberation Serif", serif; color: #2f5597; }
.glyph { font-size: 13px; color: #333; }
.set .sm { font-size: 10px; }
.set .digits { flex-direction: column; gap: 0; align-items: flex-end; padding-right: 4px; font: 9px/10px "Open Sans", sans-serif; color: #222; }
.digits span { display: flex; align-items: center; gap: 1px; }
.combo { position: relative; display: block; height: 27px; border: 1px solid #abc4e4; background: #eaf2fb; color: #000; }
.combo::after { content: ""; position: absolute; right: 4px; top: 11px; border: 3px solid transparent; border-top-color: #4f79b5; border-bottom: 0; pointer-events: none; }
.combo select { appearance: none; width: 100%; height: 24px; padding: 0 2px; color: #000; }
.w-font { width: 105px; } .w-size { width: 55px; border-left: 0; } .w-full { width: 149px; }
.extra { border-left: 1px solid #9ebbdf; margin: 3px 0 12px 1px; padding-left: 7px; gap: 20px; }
.ic { gap: 7px; height: 18px; align-self: flex-start; }
.big { flex-direction: column; justify-content: flex-start; padding-top: 6px; line-height: 17px; white-space: nowrap; }
.big > svg { margin-bottom: 10px; }
.big span { display: flex; align-items: center; justify-content: center; gap: 6px; }
.big .sort { height: 32px; margin-bottom: 10px; gap: 0; align-items: flex-start; padding-top: 3px; }
.big .az { flex-direction: column; gap: 0; }
.az b { font: bold 16px/15px "Liberation Serif", serif; color: #2b5ab4; }
.az b + b { color: #a9342f; }
.big > .dd { margin-top: 6px; }
.g-clip .big { width: 86px; }
.g-style .body { padding-left: 5px; gap: 5px; }
.g-edit .body { gap: 6px; }
.stack { display: flex; flex-direction: column; gap: 10px; padding: 7px 0 0 8px; }
.tools { padding-left: 0; margin-left: -10px; }
.tools { margin-left: -8px; }
.line { height: 16px; gap: 4px; justify-content: flex-start; white-space: nowrap; }
.g-edit .line { gap: 8px; width: 28px; }
.sigma { font: bold 15px/16px "Liberation Serif", serif; color: #000; }

/* formula bar */
.formulabar { display: flex; height: 26px; flex: none; margin: 3px 0; border: 1px solid #6b8fbd; border-width: 1px 0; background: #fff; color: #000; }
.namebox { display: flex; align-items: center; width: 181px; }
.namebox input { width: 160px; text-align: center; font: 15px/20px Lato, sans-serif; }
.tri { border: 5px solid transparent; border-top-color: #000; border-bottom: 0; margin-left: 4px; }
.fxzone { display: flex; align-items: center; justify-content: space-between; width: 101px; padding: 0 6px; border: 1px solid #6b8fbd; border-width: 0 1px; border-radius: 12px 0 0 12px; background: linear-gradient(#e8f0fb, #c4d6f0 60%, #9bbbe6); }
.knob { width: 8px; height: 8px; border-radius: 50%; background: radial-gradient(circle at 70% 70%, #f4f4f6, #9ba6bb); }
.fx { align-items: baseline; font: 20px/20px "Liberation Serif", serif; color: #444; }
.fx sub { font: italic bold 13px/12px "Liberation Serif", serif; }
.formula { flex: 1; min-width: 0; padding: 0 9px; font: 16px/20px Lato, "Noto Sans", sans-serif; }
.expand { width: 20px; border: 1px solid #6b8fbd; border-width: 0 1px; background: linear-gradient(#eaf2fd, #b4cbec); }

/* worksheet */
.work { display: flex; flex: 1; min-height: 0; border-top: 1px solid #6b8fbd; }
.sheet { flex: 1; min-width: 0; overflow: hidden; background: #fff; }
.grid { table-layout: fixed; border-collapse: separate; border-spacing: 0; width: 1394px; font: 16px/20px Lato, sans-serif; color: #000; }
.grid th, .grid td { width: 80px; height: 24px; padding: 0 3px; overflow: hidden; border-right: 1px solid #d0d7e5; border-bottom: 1px solid #d0d7e5; }
.grid td { position: relative; white-space: nowrap; }
.grid th { font-weight: 400; color: #27413e; padding: 0; text-align: center; border-color: #9eb6ce; }
.grid thead th { background: linear-gradient(#f8fafd, #dfe6f0 60%, #d3dbe9); }
.grid thead .sel { background: linear-gradient(#f8d79c, #f1c05f); border-color: #f29536; }
.grid tbody th { background: #e4ecf7; }
.grid tbody .sel { background: #ffd58d; border-color: #f29536; }
.grid tr > th:first-child { width: 34px; }
.grid thead .corner { background: #a9c4e9; }
.corner i { display: block; margin: 4px 4px 3px 14px; height: 15px; background: linear-gradient(135deg, transparent 50%, #e4ecf7 50%); }
.num { text-align: right; }
.grid .cur { overflow: visible; }
.cur::before { content: ""; position: absolute; inset: -2px; border: 3px solid #111; }
.cur::after { content: ""; position: absolute; right: -3px; bottom: -3px; width: 6px; height: 6px; background: #111; border: 1px solid #fff; border-width: 1px 0 0 1px; }

.vscroll { display: flex; flex-direction: column; width: 23px; border-right: 4px solid #aec8ee; background: linear-gradient(90deg, #6f92c2, #83a3cf); }
.split { height: 9px; flex: none; border: 2px solid #eaf3ff; background: linear-gradient(#6b8fbd 0 1px, #fff 1px); }
.vbtn { height: 21px; flex: none; }
.vthumb { flex: 9; display: flex; align-items: center; justify-content: center; border: 1px solid #51658f; border-radius: 2px; background: linear-gradient(90deg, #f1f2f6, #dfe3ea 45%, #bccadb 50%, #b3c5dd); }
.vthumb i { width: 8px; height: 7px; background: repeating-linear-gradient(#737b88 0 1px, #eef1f6 1px 2px); }
.vspace { flex: 1; }
.au, .ad, .al, .ar { border: 5px solid transparent; }
.au { border-bottom-color: #4a5070; border-top: 0; }
.ad { border-top-color: #3d4d78; border-bottom: 0; }
.al { border-right-color: #4a5070; border-left: 0; }
.ar { border-left-color: #4a5070; border-right: 0; }

/* sheet tabs */
.sheetbar { display: flex; height: 21px; flex: none; border-top: 1px solid #8ba7d0; border-bottom: 1px solid #5371a5; background: #7a9bd0; }
.navs { display: flex; width: 78px; padding-left: 2px; background: linear-gradient(#dce9fb, #c0d7f6 50%, #d0e2f9); }
.navs button { width: 18px; }
.navs svg { fill: #153f93; }
.stabs { display: flex; flex: none; width: 727px; background: #9db8e0; border-left: 1px solid #8ba7d0; overflow: hidden; }
.stab { position: relative; width: 64px; font: 14px/18px "Noto Sans", sans-serif; }
.stab::before { content: ""; position: absolute; inset: 0 -3px 0 5px; background: linear-gradient(#dceafc, #bcd5f7 45%, #d5e6fb); border-right: 1px solid #fff; box-shadow: 1px 0 #7391c0; transform: skewX(-38deg); }
.stab span { position: relative; }
.first::before { inset: 0 -3px 0 0; box-shadow: -20px 0 #d0e2f9, 1px 0 #7391c0; }
.stab.on { font-weight: 700; z-index: 1; }
.stab.on::before { background: #fff; }
.stab.on::after { content: ""; position: absolute; inset: 0 30px 0 0; background: #fff; border-left: 1px solid #7391c0; }
.stab.on span { z-index: 1; }
.ten { width: 76px; }
.new { width: 34px; }
.hscroll { display: flex; flex: 1; min-width: 0; margin-right: 23px; background: linear-gradient(#86a3cc, #7696c2); }
.hsplit { width: 8px; border: 2px solid #fff; background: linear-gradient(90deg, #6b8fbd 0 1px, #fff 1px); outline: 1px solid #7391c0; }
.hbtn { width: 21px; }
.hthumb { flex: 13; display: flex; align-items: center; justify-content: center; border: 1px solid #51658f; border-radius: 2px; background: linear-gradient(#f4f5f8, #dfe3ea 45%, #bccadb 50%, #b3c5dd); }
.hthumb i { width: 7px; height: 7px; background: repeating-linear-gradient(90deg, #737b88 0 1px, #eef1f6 1px 2px); }
.hspace { flex: 2; }

/* status bar */
.status { display: flex; align-items: stretch; height: 27px; flex: none; border-top: 1px solid #eff6ff; border-bottom: 1px solid #2a3c5e; background: linear-gradient(#d3e4fb, #c5dcf8 34%, #b0cff5 38%, #d6e6fb); }
.ready { width: 61px; margin: 1px 0 2px; padding-left: 7px; line-height: 24px; border-right: 1px solid #8fb0de; color: #1b2f6b; }
.views { display: flex; margin-left: auto; padding: 1px 0 1px 4px; border-left: 2px solid #e7f1ff; background: linear-gradient(#b1ccf3, #8db2e8 40%, #7ea5dc 45%, #a5c4ef); }
.views button { width: 23px; border: 1px solid #86a8d9; border-left-width: 0; }
.views button:not(.hot) { background: #cfdff5; }
.zoom { display: flex; align-items: center; gap: 8px; padding: 0 5px 0 8px; color: #17306e; background: linear-gradient(#b1ccf3, #8db2e8 40%, #7ea5dc 45%, #a5c4ef); }
.round { width: 20px; height: 20px; border-radius: 50%; border: 2px solid #fff; outline: 1px solid #5272a8; outline-offset: -1px; background: #d6e1f2; margin-left: 2px; }
.zoom .round:last-child { margin-left: -8px; }
.zoom input { appearance: none; width: 127px; height: 20px; margin-left: -8px; }
.zoom input::-webkit-slider-runnable-track { height: 1px; background: #e9f1fc; box-shadow: 0 1px #5d80b8; }
.zoom input::-webkit-slider-thumb { appearance: none; width: 11px; height: 16px; margin-top: -8px; background: linear-gradient(#fff, #b7cdee); border: 1px solid #44608f; border-radius: 1px 1px 6px 6px; box-shadow: inset 0 0 0 1px #fff; }

/* taskbar */
.taskbar { display: flex; align-items: center; height: 47px; flex: none; padding-left: 11px; border-top: 1px solid #8aa1c9; color: #fff; background: radial-gradient(ellipse 60px 30px at 160px 40px, #6f8ac6, transparent), radial-gradient(ellipse 70px 50px at 465px 26px, #7f99d3 50%, transparent), radial-gradient(ellipse 50px 30px at 330px 36px, #6f8bcb, transparent), radial-gradient(ellipse 60px 34px at 710px 34px, #809ad6, transparent), radial-gradient(ellipse 24px 34px at 925px 4px, #6f8bca, transparent), radial-gradient(ellipse 26px 50px at 1000px 14px, #7d98d6, transparent), linear-gradient(90deg, #2c4269, #3f588a 12%, #546ea6 35%, #5f79b4 50%, #3e5280 57%, #3c5080 74%, #283f68 80%, #243555); }
.start { width: 44px; }
.grip { width: 11px; height: 38px; margin-left: 15px; background: radial-gradient(circle, #0e1524 1px, transparent 2px) 0 0 / 4px 7px; }
.tasks { display: flex; align-items: stretch; align-self: stretch; gap: 4px; margin-left: 9px; }
.task { width: 66px; }
.open { border: 1px solid #22304f; border-radius: 2px; box-shadow: inset 0 0 0 1px #ffffff88; background: linear-gradient(135deg, #ffffff88, #ffffff22 50%, #ffffff33); }
.multi { padding-right: 5px; background: linear-gradient(90deg, transparent 60px, #22304f 60px 61px, #ffffff66 61px 62px, transparent 62px), linear-gradient(135deg, #ffffff88, #ffffff22 50%, #ffffff33); }
.bright { background: linear-gradient(135deg, #ffffffcc, #ffffff77 50%, #ffffff99); }
.grip.right { margin-left: auto; }
.tray { display: flex; align-items: center; margin: 0 6px 0 10px; }
.lang { width: 42px; font-size: 13px; padding-bottom: 4px; }
.tray svg { margin-right: 13px; }
.tray svg:nth-of-type(1) { margin-right: 19px; }
.tray svg:nth-of-type(3) { margin-right: 11px; }
.clock { display: flex; flex-direction: column; width: 84px; align-items: center; font-size: 13px; line-height: 22px; }
.desk { width: 15px; height: 46px; border: 1px solid #8a9bbd; background: linear-gradient(#6f83a9, #1f2f4f 50%, #33486f); }
```
